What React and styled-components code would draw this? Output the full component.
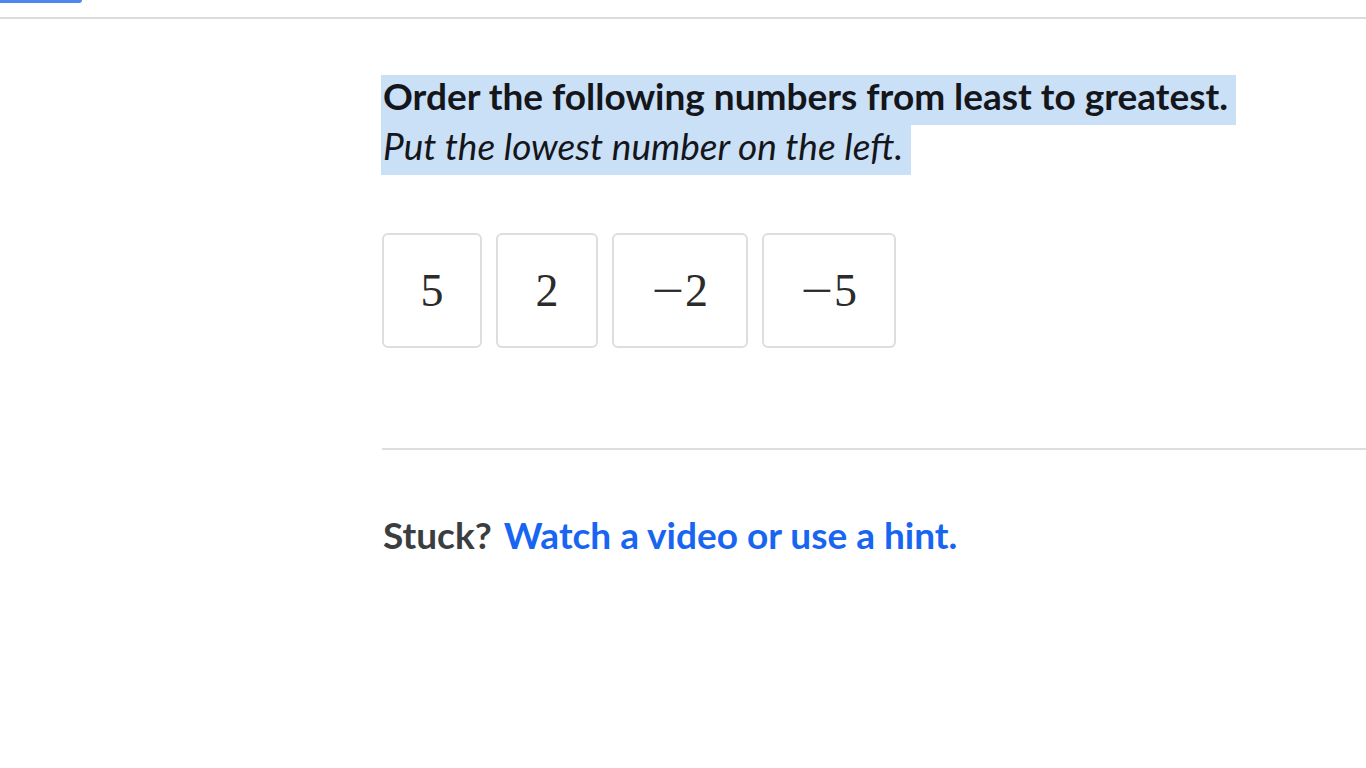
import React from "react";
import styled, { createGlobalStyle } from "styled-components";

const Global = createGlobalStyle`
  html, body { margin: 0; padding: 0; background: #fff; }
  body { font-family: Lato, "Noto Sans", sans-serif; color: #21242c; }
`;

const Page = styled.div`
  width: 1366px;
  height: 768px;
  overflow: hidden;
  background: #fff;
`;

const Header = styled.header`
  height: 17px;
  border-bottom: 2px solid #dcdcdc;
`;

const TabStub = styled.div`
  width: 82px;
  height: 3px;
  background: #4f86ee;
  border-bottom-right-radius: 3px;
`;

const Content = styled.main`
  padding: 56px 0 0 381px;
`;

const Prompt = styled.div`
  display: flex;
  flex-direction: column;
  align-items: flex-start;
`;

const HighlightLine = styled.span`
  display: inline-block;
  background: #cae0f7;
  font-size: 37px;
  line-height: 42px;
  padding: 0 ${(p) => p.$trail}px 8px 2px;
  font-weight: ${(p) => (p.$bold ? 700 : 400)};
  font-style: ${(p) => (p.$italic ? "italic" : "normal")};
  color: #14161b;
  white-space: nowrap;
`;

const Cards = styled.div`
  display: flex;
  gap: 14px;
  margin-top: 58px;
  padding-left: 1px;
`;

const Card = styled.div`
  box-sizing: border-box;
  width: ${(p) => p.$w}px;
  height: 115px;
  border: 2px solid #dedede;
  border-radius: 6px;
  display: flex;
  align-items: center;
  justify-content: center;
  font-family: "Liberation Serif", "DejaVu Serif", serif;
  font-size: 46px;
  color: #2b2b2b;
`;

const Minus = styled.span`
  display: inline-block;
  width: 33px;
  text-align: left;
  transform-origin: left center;
  transform: scaleX(1.25);
`;

const Divider = styled.hr`
  border: none;
  height: 2px;
  background: #dddddd;
  margin: 100px 0 0 1px;
`;

const Help = styled.p`
  margin: 60px 0 0 2px;
  font-size: 37px;
  line-height: 50px;
  font-weight: 700;
  color: #3b3e40;
`;

const HelpLink = styled.a`
  color: #1865f2;
  text-decoration: none;
  margin-left: 12px;
`;

const items = [
  { v: "5", w: 100 },
  { v: "2", w: 102 },
  { v: "2", neg: true, w: 136 },
  { v: "5", neg: true, w: 134 },
];

export default function App() {
  return (
    <Page>
      <Global />
      <Header>
        <TabStub />
      </Header>
      <Content>
        <Prompt>
          <HighlightLine $bold $trail={8}>
            Order the following numbers from least to greatest.
          </HighlightLine>
          <HighlightLine $italic $trail={8}>
            Put the lowest number on the left.
          </HighlightLine>
        </Prompt>
        <Cards>
          {items.map((it, i) => (
            <Card key={i} $w={it.w}>
              {it.neg && <Minus>−</Minus>}
              {it.v}
            </Card>
          ))}
        </Cards>
        <Divider />
        <Help>
          Stuck?
          <HelpLink href="#">Watch a video or use a hint.</HelpLink>
        </Help>
      </Content>
    </Page>
  );
}
